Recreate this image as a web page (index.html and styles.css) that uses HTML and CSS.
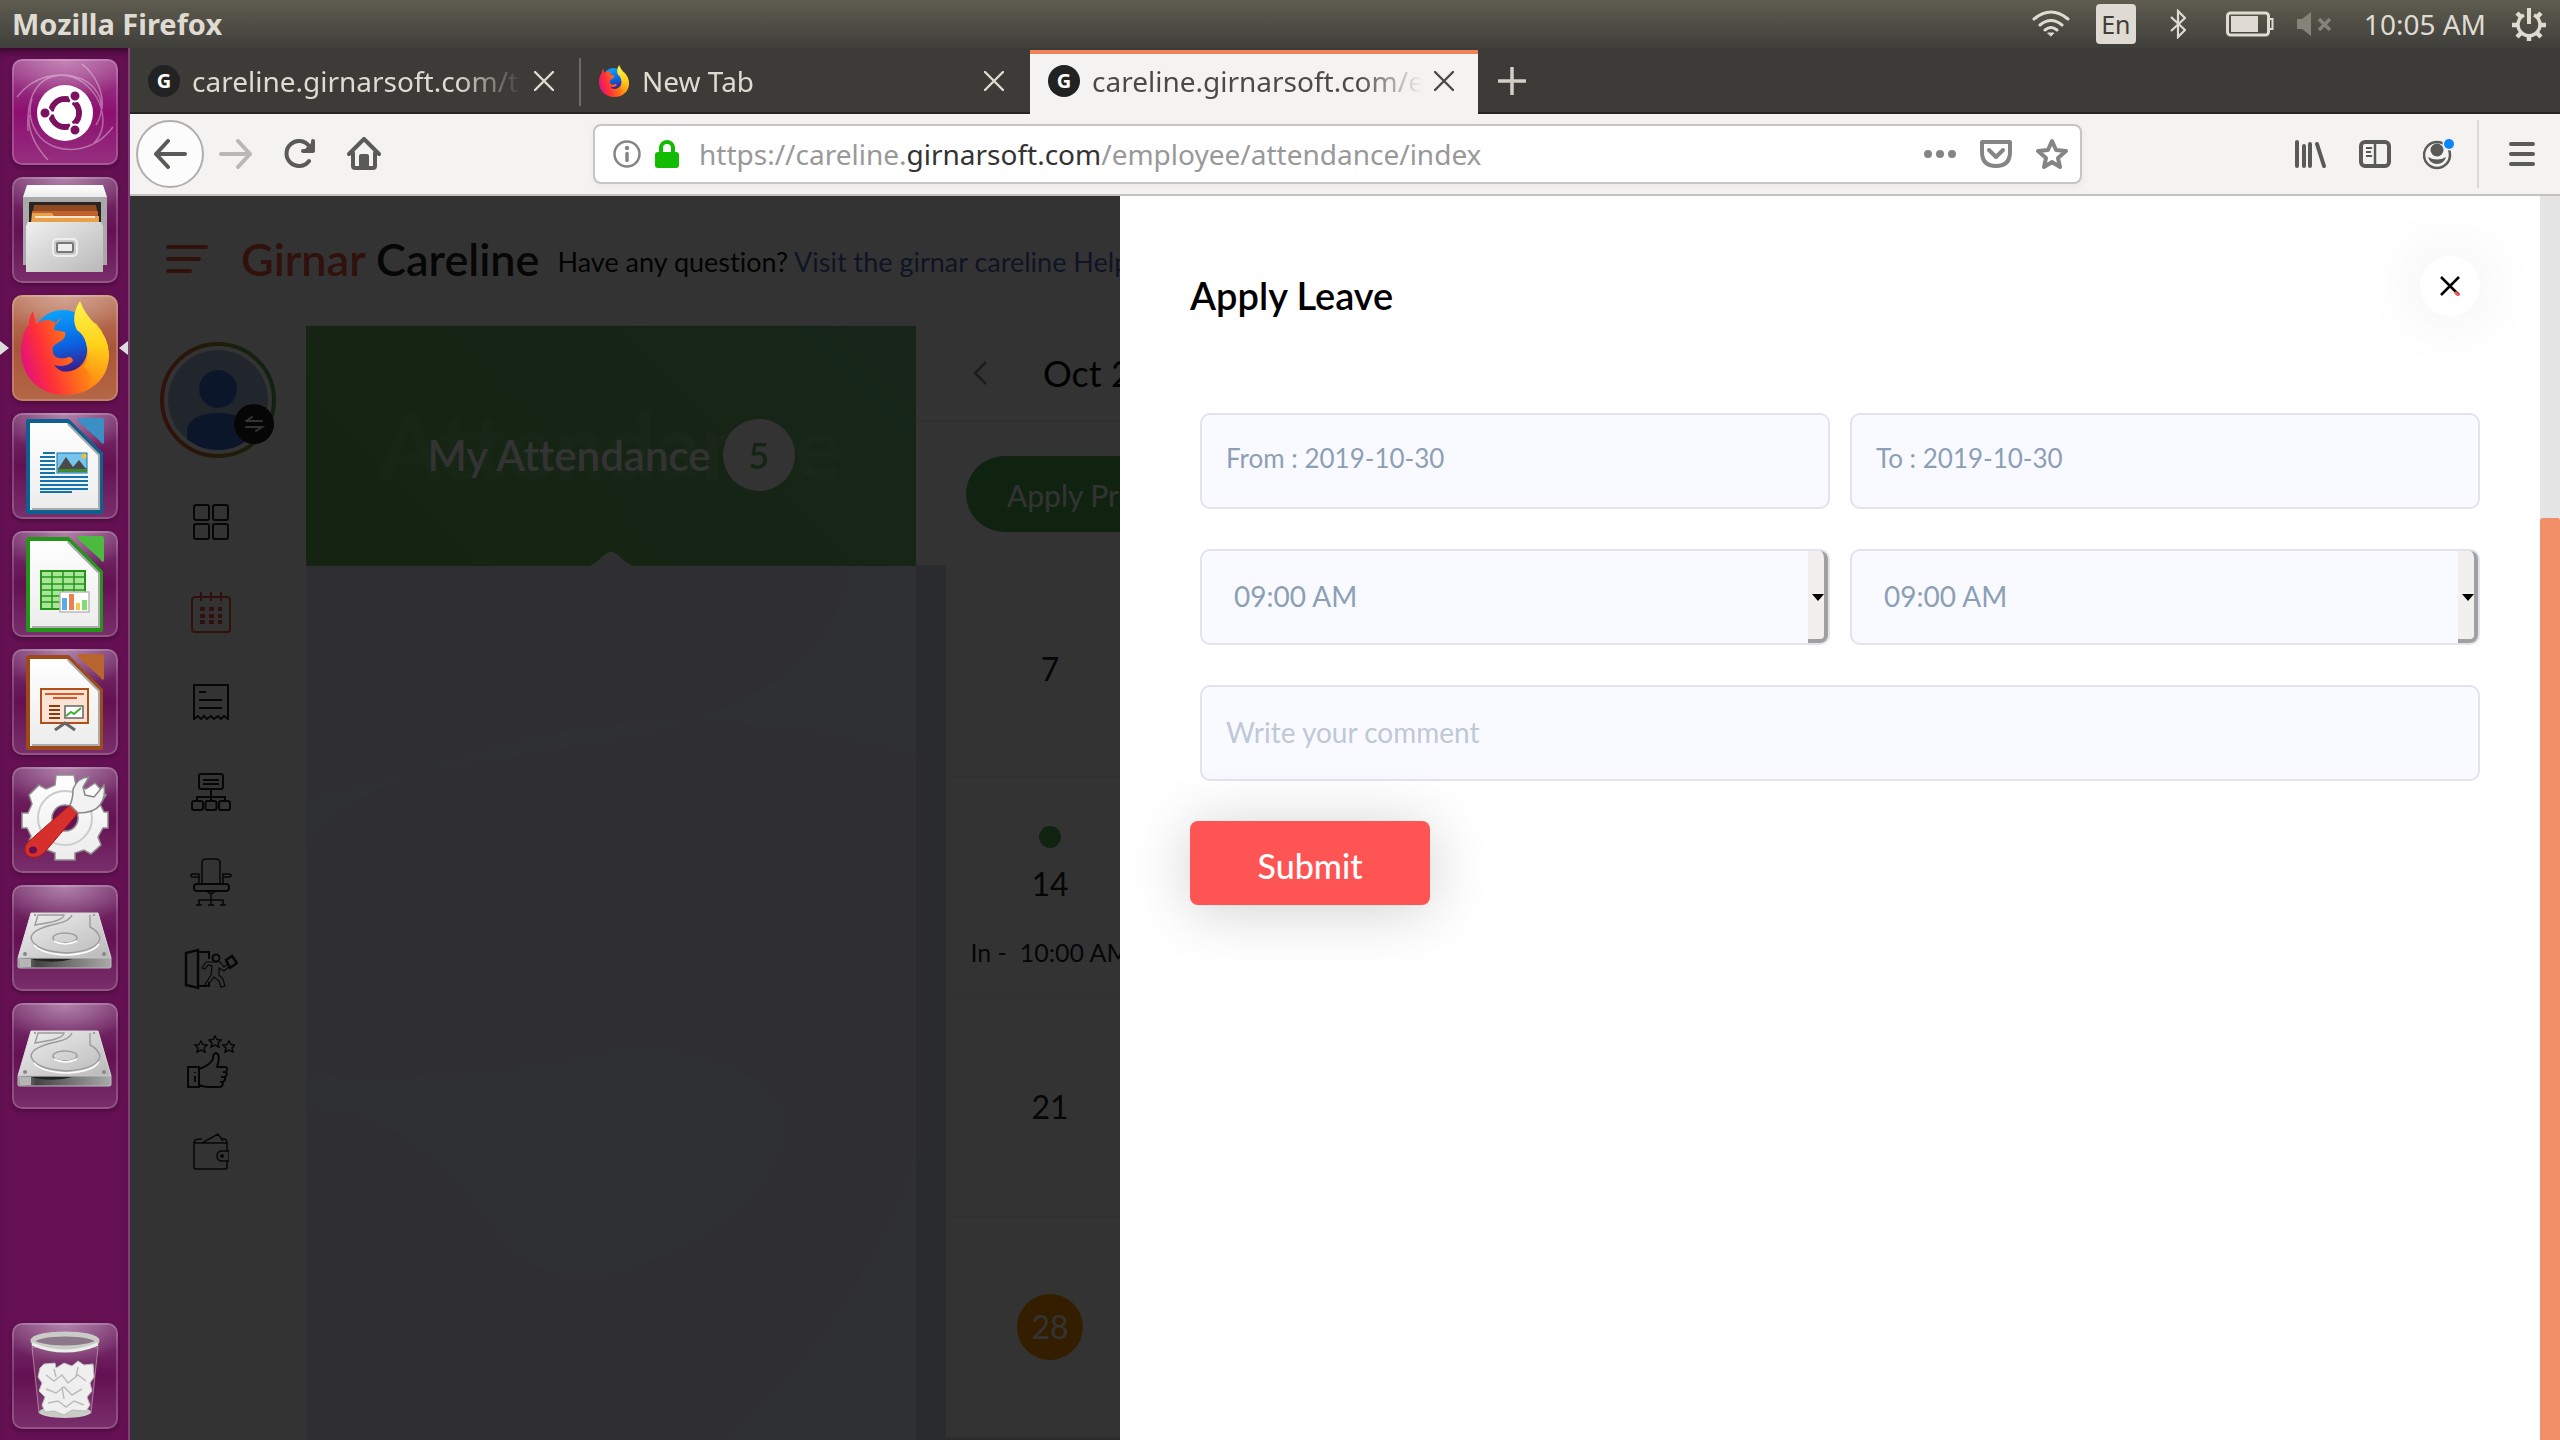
FILE: index.html
```html
<!DOCTYPE html>
<html lang="en">
<head>
<meta charset="utf-8">
<title>Mozilla Firefox</title>
<link rel="stylesheet" href="styles.css">
</head>
<body>

<svg class="defs" aria-hidden="true">
  <defs>
    <linearGradient id="foxBody" x1="0" y1="0.6" x2="1" y2="0.3">
      <stop offset="0" stop-color="#e3107e"/><stop offset="0.25" stop-color="#ff3038"/><stop offset="0.6" stop-color="#ff7a14"/><stop offset="1" stop-color="#ffc31f"/>
    </linearGradient>
    <linearGradient id="foxFlame" x1="0" y1="0" x2="0" y2="1">
      <stop offset="0" stop-color="#fff44f"/><stop offset="0.5" stop-color="#ffd21a"/><stop offset="1" stop-color="#ff8a12" stop-opacity="0.4"/>
    </linearGradient>
    <linearGradient id="foxGlobe" x1="0.3" y1="0" x2="0.5" y2="1">
      <stop offset="0" stop-color="#0aa5ff"/><stop offset="0.6" stop-color="#0b62e0"/><stop offset="1" stop-color="#3a1c8c"/>
    </linearGradient>
    <linearGradient id="metal" x1="0" y1="0" x2="1" y2="1">
      <stop offset="0" stop-color="#f0f0f0"/><stop offset="1" stop-color="#b8b8b8"/>
    </linearGradient>
    <linearGradient id="metalDark" x1="0" y1="0" x2="1" y2="0">
      <stop offset="0" stop-color="#9a9a9a"/><stop offset="0.2" stop-color="#444"/><stop offset="1" stop-color="#aaa"/>
    </linearGradient>
    <linearGradient id="paper" x1="0" y1="0" x2="0" y2="1">
      <stop offset="0" stop-color="#fff"/><stop offset="1" stop-color="#ececec"/>
    </linearGradient>
    <linearGradient id="ring" x1="0" y1="0.6" x2="1" y2="0.4">
      <stop offset="0" stop-color="#f0563a"/><stop offset="0.5" stop-color="#a8842f"/><stop offset="1" stop-color="#4caf50"/>
    </linearGradient>
    <symbol id="firefox" viewBox="0 0 90 94">
      <circle cx="43" cy="40" r="31" fill="url(#foxGlobe)"/>
      <path fill="url(#foxBody)" d="M13 10 16 23Q28 15 37 23L41 16Q34 22 34 29L45 31Q47 37 38 42Q31 44 33 52Q35 59 46 57Q52 54 53 60Q47 67 34 64Q43 76 58 67Q70 58 67 38Q66 20 76 22Q88 36 89 54C89 78 70 94 45 94C20 94 0 76 1 48Q2 30 9 24Q9 15 13 10Z"/>
      <path fill="url(#foxFlame)" d="M60 0Q64 12 76 24Q89 38 89 54Q86 78 66 88Q76 74 64 66Q70 56 66 42Q64 34 57 29Q50 16 60 0Z"/>
    </symbol>
    <symbol id="close" viewBox="0 0 20 20"><path d="M1 1 19 19M19 1 1 19" fill="none" stroke="currentColor" stroke-width="2.4" stroke-linecap="round"/></symbol>
    <symbol id="drive" viewBox="0 0 106 106">
      <path fill="url(#metal)" stroke="#ddd" d="M19 22H86L99 67H6Z"/>
      <path fill="url(#metalDark)" stroke="#bbb" d="M6 67H99V76Q99 77 97 77H8Q6 77 6 76Z"/>
      <path fill="#b5b5b5" d="M7 68H19V76H8Z"/><path fill="#222" d="M20 68H60Q44 73 22 69Z"/>
      <g fill="none" stroke="#9c9c9c" stroke-width="1.4"><path d="M23 34 26 24H52Q52 28 40 31ZM60 24Q58 30 44 33Q20 38 19 47Q22 60 54 62Q86 60 88 47Q86 40 78 36V24"/><ellipse cx="53" cy="47" rx="12" ry="5"/></g>
      <path fill="none" stroke="#fff" stroke-width="1.600" d="M22 54Q30 63 54 64Q80 63 87 53M42 50Q53 56 65 50"/>
      <g fill="#888"><circle cx="13" cy="63" r="2"/><circle cx="92" cy="63" r="2"/><circle cx="23" cy="24" r="1"/><circle cx="82" cy="24" r="1"/></g>
    </symbol>
    <symbol id="favicon" viewBox="0 0 32 32"><circle cx="16" cy="16" r="16" fill="#222"/><text x="16" y="23" text-anchor="middle" class="favicon-letter">G</text></symbol>
  </defs>
</svg>

<header class="panel">
  <span class="panel-title">Mozilla Firefox</span>
  <div class="indicators">
    <svg width="38" height="28" viewBox="0 0 38 28" fill="none" stroke="#dfdbd2" stroke-width="3" stroke-linecap="round"><path d="M2 9Q19 -5 36 9M8 15Q19 6 30 15M13 20Q19 15 25 20"/><path d="M16 23H22L19 26Z" fill="#dfdbd2" stroke-width="1"/></svg>
    <span class="lang">En</span>
    <svg width="16" height="30" viewBox="0 0 16 30" fill="none" stroke="#dfdbd2" stroke-width="2.200"><path d="M1 8 15 21 8 28V2L15 9 1 22"/></svg>
    <svg width="48" height="26" viewBox="0 0 48 26"><rect x="1.500" y="2" width="41" height="22" rx="3" fill="none" stroke="#dfdbd2" stroke-width="3"/><rect x="5" y="5" width="27" height="16" fill="#dfdbd2"/><path d="M44 8H46.500V18H44" fill="none" stroke="#dfdbd2" stroke-width="2"/></svg>
    <svg width="35" height="24" viewBox="0 0 35 24"><path d="M0 7H5L14 0V24L5 17H0Z" fill="#85827a"/><path d="M22 7 33 18M33 7 22 18" stroke="#85827a" stroke-width="3.500"/></svg>
    <time class="clock">10:05 AM</time>
    <svg width="34" height="34" viewBox="0 0 34 34" fill="none" stroke="#dfdbd2"><path d="M12 8A11 11 0 1 0 22 8" stroke-width="3.500"/><path d="M17 1V17" stroke-width="4"/><path d="M17 29V34M0 18H5M29 18H34M5 6 9 10M29 6 25 10M5 30 9 26M29 30 25 26" stroke-width="4.500"/></svg>
  </div>
</header>

<div class="desktop">
  <nav class="launcher" aria-label="Launcher">
    <a href="#" class="tile tile-dash" aria-label="Search your computer">
      <svg viewBox="0 0 106 106"><g fill="none" stroke="#fff" stroke-opacity="0.35" stroke-width="1.500"><path d="M5 38C20 18 50 8 72 24C94 42 96 70 82 84M16 72C14 36 26 16 52 16C84 18 98 44 84 66M101 68C80 96 44 96 28 78C18 66 16 52 20 40M36 101C22 86 16 70 17 56M70 5C84 16 92 34 90 50"/></g><circle cx="53" cy="54" r="28" fill="#fff"/><circle cx="53" cy="54" r="14" fill="none" stroke="#7a1260" stroke-width="6"/><path d="M53 54 37 54M53 54 61 40M53 54 61 68" stroke="#fff" stroke-width="3"/><circle cx="53" cy="54" r="11" fill="#fff"/><g fill="#7a1260" stroke="#fff" stroke-width="2"><circle cx="33" cy="54" r="5.500"/><circle cx="63" cy="37" r="5.500"/><circle cx="63" cy="71" r="5.500"/></g></svg>
    </a>
    <a href="#" class="tile" aria-label="Files">
      <svg viewBox="0 0 106 106"><path fill="#a9a9a9" d="M11 20H95V88H11Z"/><path fill="url(#paper)" d="M15 8H91L95 20H11Z"/><path fill="#2b2321" d="M17 25H89V48H17Z"/><path fill="#8f4a22" d="M22 28H84L87 46H19Z"/><path fill="#c2602c" d="M20 34H86V46H20Z"/><path fill="#e9a04a" d="M20 36H40L42 39H87V46H19Z"/><path stroke="#fff" stroke-width="1.500" d="M23 40H83"/><path fill="url(#metal)" d="M16 45H89L91 49V95H14V49Z"/><rect x="41" y="62" width="24" height="17" rx="4" fill="#ccc" stroke="#eee" stroke-width="2"/><rect x="45" y="66" width="16" height="9" rx="1" fill="#eee" stroke="#777" stroke-width="2"/></svg>
    </a>
    <a href="#" class="tile tile-running" aria-label="Firefox">
      <svg viewBox="0 0 106 106"><use href="#firefox" x="8" y="6" width="90" height="94"/></svg>
    </a>
    <a href="#" class="tile" aria-label="Writer">
      <svg viewBox="0 0 106 106"><path fill="url(#paper)" stroke="#0d6191" stroke-width="4" stroke-linejoin="round" d="M16 8H56L89 41V99H16Z"/><path fill="none" stroke="#aaa" stroke-width="2" d="M20 96H87V42L56 11"/><path fill="#3a8fc4" d="M66 5H90Q92 5 92 8V30Q90 32 88 28L67 9Q65 6 66 5Z"/><g stroke="#1373ae" stroke-width="2"><path d="M31 40H43M28 44H43M28 48H43M28 52H43M28 56H43M28 60H43M28 64H76M28 68H76M28 72H76M28 76H76M28 79H60"/></g><rect x="45" y="40" width="30" height="20" fill="#77c4ee" stroke="#1373ae"/><path fill="#3f8a2e" d="M46 55H75V59H46Z"/><path fill="#4a4a4a" d="M46 56 54 44 61 54 67 47 74 56Z"/><circle cx="72" cy="43" r="2.500" fill="#f3c12b"/></svg>
    </a>
    <a href="#" class="tile" aria-label="Calc">
      <svg viewBox="0 0 106 106"><path fill="url(#paper)" stroke="#23961a" stroke-width="4" stroke-linejoin="round" d="M16 8H56L89 41V99H16Z"/><path fill="none" stroke="#aaa" stroke-width="2" d="M20 96H87V42L56 11"/><path fill="#4cb93f" d="M66 5H90Q92 5 92 8V30Q90 32 88 28L67 9Q65 6 66 5Z"/><rect x="29" y="40" width="44" height="38" fill="#a9e596" stroke="#23961a" stroke-width="2"/><path fill="none" stroke="#23961a" stroke-width="1.500" d="M29 46H73M29 53H73M29 59H73M29 65H73M29 71H73M40 40V78M51 40V78M62 40V78"/><rect x="48" y="61" width="29" height="20" fill="#fff" stroke="#bbb" stroke-width="1.500"/><path fill="#5ba9e8" d="M50 67H55V79H50Z"/><path fill="#e98250" d="M57 63H62V79H57Z"/><path fill="#f3c84c" d="M64 72H68V79H64Z"/><path fill="#7fdd6f" d="M70 69H75V79H70Z"/></svg>
    </a>
    <a href="#" class="tile" aria-label="Impress">
      <svg viewBox="0 0 106 106"><path fill="url(#paper)" stroke="#9c4a1a" stroke-width="4" stroke-linejoin="round" d="M16 8H56L89 41V99H16Z"/><path fill="none" stroke="#aaa" stroke-width="2" d="M20 96H87V42L56 11"/><path fill="#b8652f" d="M66 5H90Q92 5 92 8V30Q90 32 88 28L67 9Q65 6 66 5Z"/><rect x="29" y="40" width="47" height="34" fill="#fbe3d4" stroke="#b2501c" stroke-width="2"/><path stroke="#d9582a" stroke-width="2" d="M33 45H72M41 49H65"/><path stroke="#8c3b10" stroke-width="2" d="M37 57H48M37 61H48M37 65H48M37 69H48"/><rect x="53" y="57" width="18" height="12" fill="#fff" stroke="#666" stroke-width="1.500"/><path fill="none" stroke="#45ad36" stroke-width="2" d="M54 67 59 63 62 65 69 59"/><path fill="none" stroke="#666" stroke-width="3" d="M43 81 53 74 63 81"/></svg>
    </a>
    <a href="#" class="tile" aria-label="System Settings">
      <svg viewBox="0 0 106 106"><path fill="url(#paper)" stroke="#8d8d8d" stroke-width="1.500" fill-rule="evenodd" d="M44 8H62L64 18 74 22 83 16 94 28 88 37 92 45H96V61H91L86 70 89 78 79 87 72 83 63 86V93H43V86L33 82 24 86 16 77 19 69 15 61H10V46H16L20 37 17 28 27 18 34 22 43 18ZM53 38A13 13 0 1 0 53.100 38Z"/><circle cx="53" cy="51" r="27" fill="none" stroke="#ccc" stroke-width="2"/><path fill="#d62f2c" stroke="#a31a1a" d="M58 38 66 46 32 86Q24 93 16 89Q10 83 15 76Z"/><path fill="#f2f2f2" stroke="#888" stroke-width="1.500" d="M58 38 66 46Q82 46 88 38Q94 30 92 18L82 30 73 28 71 20 77 10Q66 10 61 22Q61 32 58 38Z"/><ellipse cx="21" cy="83" rx="4" ry="3.500" fill="#641052"/></svg>
    </a>
    <a href="#" class="tile" aria-label="First volume"><svg viewBox="0 0 106 106"><use href="#drive" y="6"/></svg></a>
    <a href="#" class="tile" aria-label="Second volume"><svg viewBox="0 0 106 106"><use href="#drive" y="6"/></svg></a>
    <a href="#" class="tile tile-trash" aria-label="Trash">
      <svg viewBox="0 0 106 106"><path fill="#fff" fill-opacity="0.1" stroke="#cbb" stroke-opacity="0.6" d="M20 24H86L79 90Q53 98 27 90Z"/><ellipse cx="53" cy="89" rx="26" ry="6" fill="#c9cbc5"/><path fill="#efefef" stroke="#bdbdbd" d="M28 45 32 41 43 40 44 45 52 40 60 43 66 38 72 42 81 41 82 54 78 60 80 68 75 74 78 82 74 88 60 87 52 92 42 88 33 89 30 82 33 74 27 68 30 60 26 54Z"/><path fill="none" stroke="#bcbcbc" stroke-width="1.500" d="M34 52 42 58 50 52 56 60 66 52 74 58M34 66 44 70 52 64 60 72 70 66M36 80 46 78 54 84 62 78 72 82M42 46 44 54M66 44 64 54M50 64 52 76"/><ellipse cx="53" cy="18" rx="32" ry="7" fill="#8d7889" stroke="#c9ccc7" stroke-width="5"/><path fill="none" stroke="#eceeea" stroke-width="3" d="M20 21Q53 35 86 21"/></svg>
    </a>
  </nav>

  <div class="browser">
    <div class="tabs">
      <div class="tab">
        <svg class="tab-icon"><use href="#favicon"/></svg>
        <span class="tab-title">careline.girnarsoft.com/ti</span>
        <button class="tab-close" aria-label="Close tab"><svg><use href="#close"/></svg></button>
      </div>
      <div class="tab tab-second">
        <svg class="tab-icon"><use href="#firefox"/></svg>
        <span class="tab-title">New Tab</span>
        <button class="tab-close" aria-label="Close tab"><svg><use href="#close"/></svg></button>
      </div>
      <div class="tab tab-active">
        <svg class="tab-icon"><use href="#favicon"/></svg>
        <span class="tab-title">careline.girnarsoft.com/e</span>
        <button class="tab-close" aria-label="Close tab"><svg><use href="#close"/></svg></button>
      </div>
      <button class="new-tab" aria-label="New tab"><svg width="28" height="28" viewBox="0 0 28 28"><path d="M14 1V27M1 14H27" stroke="#d3cfc6" stroke-width="3.500" stroke-linecap="round"/></svg></button>
    </div>

    <div class="toolbar">
      <div class="nav-buttons">
        <button class="nav-back" aria-label="Back"><svg width="34" height="30" viewBox="0 0 34 30" fill="none" stroke="#5a5a57" stroke-width="4" stroke-linecap="round" stroke-linejoin="round"><path d="M15 2 3 15 15 28M3 15H32"/></svg></button>
        <button aria-label="Forward"><svg width="34" height="30" viewBox="0 0 34 30" fill="none" stroke="#b9b8b6" stroke-width="4" stroke-linecap="round" stroke-linejoin="round"><path d="M19 2 31 15 19 28M31 15H2"/></svg></button>
        <button aria-label="Reload"><svg width="32" height="30" viewBox="0 0 32 30" fill="none" stroke="#5a5a57" stroke-width="4" stroke-linecap="round"><path d="M25 22A12.500 12.500 0 1 1 25 7"/><path d="M29 2V12H19" stroke-linejoin="round" fill="#5a5a57"/></svg></button>
        <button aria-label="Home"><svg width="34" height="34" viewBox="0 0 34 34" fill="none" stroke="#5a5a57" stroke-width="4" stroke-linecap="round" stroke-linejoin="round"><path d="M2 17 17 2 32 17M6 16V29Q6 31 8 31H26Q28 31 28 29V16"/><path d="M14 30V19H20V30" fill="#5a5a57"/></svg></button>
      </div>
      <div class="urlbar">
        <svg width="28" height="28" viewBox="0 0 28 28"><circle cx="14" cy="14" r="12.500" fill="none" stroke="#858585" stroke-width="2.500"/><circle cx="14" cy="8" r="2.200" fill="#858585"/><path d="M14 13.500V20.500" stroke="#858585" stroke-width="3.500" stroke-linecap="round"/></svg>
        <svg width="24" height="28" viewBox="0 0 24 28"><path d="M6 14V8A6 6 0 0 1 18 8V14" fill="none" stroke="#12bc00" stroke-width="4"/><rect y="12" width="24" height="16" rx="3" fill="#12bc00"/></svg>
        <span class="url">https://careline.<b>girnarsoft.com</b>/employee/attendance/index</span>
        <svg width="32" height="8" viewBox="0 0 32 8" fill="#858585"><circle cx="4" cy="4" r="4"/><circle cx="16" cy="4" r="4"/><circle cx="28" cy="4" r="4"/></svg>
        <svg width="32" height="28" viewBox="0 0 32 28" fill="none" stroke="#858585" stroke-width="4" stroke-linejoin="round" stroke-linecap="round"><path d="M2 2H30V12Q30 26 16 26Q2 26 2 12Z"/><path d="M9 10 16 17 23 10"/></svg>
        <svg width="32" height="32" viewBox="0 0 32 32" fill="none" stroke="#858585" stroke-width="4" stroke-linejoin="round"><path d="M16 3 20 12 30 13 22 20 24 29 16 24 8 29 10 20 2 13 12 12Z"/></svg>
      </div>
      <div class="tool-buttons">
        <button aria-label="Library"><svg width="32" height="28" viewBox="0 0 32 28" stroke="#5a5a57" stroke-width="4" stroke-linecap="round"><path d="M2 2V26M9 6V26M15 4V26M22 4 29 26"/></svg></button>
        <button aria-label="Sidebars"><svg width="32" height="28" viewBox="0 0 32 28" fill="none" stroke="#5a5a57" stroke-width="4"><rect x="2" y="2" width="28" height="24" rx="4"/><path d="M16 3V25" stroke-width="2.500"/><path d="M7 8H13M7 12H12M7 16H13" stroke-width="2"/></svg></button>
        <button aria-label="Account"><svg width="32" height="32" viewBox="0 0 32 32"><circle cx="14" cy="17" r="13" fill="none" stroke="#5a5a57" stroke-width="2.500"/><circle cx="14" cy="12" r="6.500" fill="#5a5a57"/><path d="M5 19Q14 24 23 19Q21 26 14 26Q7 26 5 19Z" fill="#5a5a57"/><circle cx="26" cy="6" r="6.500" fill="#f4f3f1"/><circle cx="26" cy="6" r="5" fill="#0a84ff"/></svg></button>
      </div>
      <button class="menu" aria-label="Menu"><svg width="26" height="26" viewBox="0 0 26 26" stroke="#5a5a57" stroke-width="4" stroke-linecap="round"><path d="M2 3H24M2 13H24M2 23H24"/></svg></button>
    </div>

    <div class="viewport">
      <div class="site">
        <header class="site-header">
          <button class="burger" aria-label="Toggle menu"><span></span><span></span><span></span></button>
          <div class="brand"><em>Girnar</em> Careline</div>
          <p class="help">Have any question? <a href="#">Visit the girnar careline Help</a></p>
        </header>
        <div class="site-main">
          <nav class="side" aria-label="Sections">
            <a href="#" class="avatar" aria-label="Profile">
              <svg width="116" height="116" viewBox="0 0 116 116"><clipPath id="face"><circle cx="58" cy="58" r="50"/></clipPath><circle cx="58" cy="58" r="56" fill="none" stroke="url(#ring)" stroke-width="4"/><g clip-path="url(#face)"><path fill="#a3b8dd" d="M0 0H116V116H0Z"/><circle cx="58" cy="47" r="19" fill="#3f6fd8"/><path fill="#3f6fd8" d="M27 116V86Q32 71 58 71Q84 71 89 86V116Z"/></g><circle cx="94" cy="82" r="20" fill="#222"/><path d="M86 79H102M86 79 92 75M86 85H102L96 89" fill="none" stroke="#fff" stroke-width="2" stroke-linecap="round"/></svg>
            </a>
            <a href="#" aria-label="Dashboard"><svg width="36" height="36" viewBox="0 0 36 36"><g><rect x="1" y="1" width="15" height="15" rx="2"/><rect x="20" y="1" width="15" height="15" rx="2"/><rect x="1" y="20" width="15" height="15" rx="2"/><rect x="20" y="20" width="15" height="15" rx="2"/></g></svg></a>
            <a href="#" class="current" aria-label="Attendance"><svg width="40" height="42" viewBox="0 0 40 42"><rect x="1" y="6" width="38" height="35" rx="3"/><path d="M10 1V10M20 1V10M30 1V10"/><path stroke-width="4" stroke-dasharray="5 4" d="M9 18H31M9 25H31M9 31H31"/></svg></a>
            <a href="#" aria-label="Payslip"><svg width="36" height="36" viewBox="0 0 36 36"><path d="M1 35V1H35V35L31 32 28 35 25 32 21 35 18 32 14 35 11 32 8 35 5 32ZM6 8H13M6 16H29M6 24H29"/></svg></a>
            <a href="#" aria-label="Organisation"><svg width="40" height="38" viewBox="0 0 40 38"><rect x="8" y="1" width="24" height="15" rx="2"/><path d="M12 7H28M12 11H28M20 16V28M6 28V24H34V28"/><rect x="1" y="28" width="11" height="9" rx="2"/><rect x="14.500" y="28" width="11" height="9" rx="2"/><rect x="28" y="28" width="11" height="9" rx="2"/></svg></a>
            <a href="#" aria-label="Seating"><svg width="42" height="48" viewBox="0 0 42 48"><path stroke-width="1.500" d="M12 26V5Q12 1 16 1H26Q30 1 30 5V26M9 26V19H3Q1 19 1 17.500Q1 16 3 16H9V19M33 26V19H39Q41 19 41 17.500Q41 16 39 16H33V19M17 33Q21 38 25 33M21 36V47M9 47V42H33V47M6 47H12M18 47H24M30 47H36"/><rect x="4" y="26" width="35" height="7" rx="3"/></svg></a>
            <a href="#" aria-label="Exit"><svg width="54" height="48" viewBox="0 0 54 48"><path stroke-width="2.500" d="M2 5 14 2V40L2 37Z"/><path d="M15 4H25V11M15 38H25V34"/><circle cx="32" cy="10" r="3.500"/><path stroke-width="1.200" d="M28 14H36L40 19 44 16 46 18 40 23 35 20V27L39 31 41 38 37 39 35 33 30 29 23 38 20 38 27 27 28 18 24 17 21 21 18 20 22 14Z"/><path stroke-width="2.500" d="M42 12 48 8 53 15 46 20Z"/></svg></a>
            <a href="#" aria-label="Recognition"><svg width="48" height="54" viewBox="0 0 48 54"><path d="M1 32H12V52H1ZM8 37V38M8 41V47M12 34Q22 31 26 24Q26 18 29 18Q34 19 30 32H38Q42 33 39 37H36M39 37Q41 39 38 42H34M38 42Q39 45 36 47H33M36 47Q36 52 32 52H20Q14 51 12 50"/><g stroke-width="1.500"><path d="M14 6 16 9.500 20 10 17 13 18 17 14 15 10 17 11 13 8 10 12 9.500ZM28 1 30 4.500 34 5 31 8 32 12 28 10 24 12 25 8 22 5 26 4.500ZM42 6 44 9.500 48 10 45 13 46 17 42 15 38 17 39 13 36 10 40 9.500Z"/></g></svg></a>
            <a href="#" aria-label="Wallet"><svg width="36" height="38" viewBox="0 0 36 38"><path stroke-width="1.500" d="M34 18V10H3Q1 9 2 7Q3 6 9 6M1 8V34Q1 36 3 36H32Q34 36 34 34V28M9 10 25 1 30 8M29 6H32Q34 7 34 10M36 18H28Q24 19 24 23Q24 27 28 28H36Z"/><circle cx="29" cy="23" r="1"/></svg></a>
          </nav>

          <section class="summary">
            <div class="summary-card">
              <span class="watermark" aria-hidden="true">Attendance</span>
              <h2>My Attendance</h2><span class="count">5</span>
              <svg class="notch" width="44" height="14" viewBox="0 0 44 14"><path fill="#ebebf5" d="M0 14Q6 12 14 4Q22 -4 30 4Q38 12 44 14Z"/></svg>
            </div>
            <svg class="waves" viewBox="0 0 610 874" preserveAspectRatio="none"><path fill="#e8edf3" d="M545 0H610V190Q400 120 160 190Q40 225 0 280V235Q120 200 330 170Q520 130 545 0ZM0 510Q180 520 330 480Q480 500 480 560Q470 650 330 700Q230 740 170 640Q90 540 0 540ZM610 590V874H420Q560 740 610 590Z"/></svg>
          </section>

          <section class="calendar">
            <div class="month">
              <button aria-label="Previous month"><svg width="14" height="24" viewBox="0 0 14 24"><path d="M13 1 2 12 13 23" fill="none" stroke="#8a8a96" stroke-width="2.500"/></svg></button>
              <span>Oct 2019</span>
            </div>
            <div class="actions"><button class="pill">Apply Previous</button></div>
            <div class="grid-wrap">
              <table class="days">
                <tr><td>7</td></tr>
                <tr><td class="logged"><i class="dot"></i>14<small>In -&nbsp; 10:00 AM</small></td></tr>
                <tr><td>21</td></tr>
                <tr><td><span class="today">28</span></td></tr>
              </table>
            </div>
          </section>
        </div>
      </div>

      <div class="scrim"></div>
      <aside class="drawer" aria-labelledby="drawer-title">
        <div class="drawer-head">
          <h1 id="drawer-title">Apply Leave</h1>
          <button class="drawer-close" aria-label="Close"><svg width="20" height="20" viewBox="0 0 20 20"><path d="M1 1 19 19M19 1 1 19" fill="none" stroke="#000" stroke-width="2.500"/><path d="M15 16 19 20" stroke="#ff5454" stroke-width="3"/></svg></button>
        </div>
        <form class="leave">
          <input type="text" class="date" aria-label="From date" value="From : 2019-10-30">
          <input type="text" class="date" aria-label="To date" value="To : 2019-10-30">
          <div class="picker"><select aria-label="From time"><option>09:00 AM</option></select></div>
          <div class="picker"><select aria-label="To time"><option>09:00 AM</option></select></div>
          <input type="text" class="comment" aria-label="Comment" placeholder="Write your comment">
          <button type="button" class="submit">Submit</button>
        </form>
      </aside>
      <div class="scrollbar"><div class="thumb"></div></div>
    </div>
  </div>
</div>
</body>
</html>
```
FILE: styles.css
```css
*, *::before, *::after { box-sizing: border-box; }

body {
  margin: 0;
  height: 100vh;
  display: flex;
  flex-direction: column;
  overflow: hidden;
  font-family: "Lato", "Open Sans", sans-serif;
  font-variant-ligatures: none;
}

button {
  padding: 0;
  border: 0;
  background: none;
  font: inherit;
  display: inline-flex;
  align-items: center;
  justify-content: center;
}

.defs { position: absolute; width: 0; height: 0; }
svg { display: block; flex: none; }

/* Desktop top panel */
.panel {
  flex: none;
  height: 48px;
  padding: 0 14px 0 12px;
  display: flex;
  align-items: center;
  justify-content: space-between;
  background: linear-gradient(#5f5d50, #3f3e3a);
  color: #dfdbd2;
  font: 28px/48px "Noto Sans", sans-serif;
}
.panel-title { font-size: 29px; font-weight: 700; }
.indicators { display: flex; align-items: center; }
.lang {
  width: 40px;
  margin: 0 34px 0 26px;
  border-radius: 4px;
  background: #dfdbd2;
  color: #3f3e3a;
  font-size: 25px;
  line-height: 40px;
  text-align: center;
}
.indicators svg:nth-of-type(2) { margin-right: 40px; }
.indicators svg:nth-of-type(3) { margin-right: 23px; }
.clock { margin: 0 26px 0 32px; }

.desktop { flex: 1; min-height: 0; display: flex; }

/* Launcher */
.launcher {
  flex: none;
  width: 130px;
  padding: 11px 10px 11px 12px;
  display: flex;
  flex-direction: column;
  gap: 12px;
  border-right: 2px solid #834078;
  background: #641052;
  box-shadow: inset 0 8px 8px -6px #2a0622;
}
.tile {
  position: relative;
  width: 106px;
  height: 106px;
  border-radius: 10px;
  background: radial-gradient(ellipse 70px 40px at 50% 0, #b184ab, #b184ab00), linear-gradient(#7a3570, #641052 50%, #7a2f6c);
  box-shadow: inset 0 0 0 2px #ffffff30, 0 2px 4px #0004;
}
.tile-dash { background: radial-gradient(ellipse 70px 40px at 50% 0, #c684b6, #c684b600), linear-gradient(#a04a90, #8c0f70 50%, #96307f); }
.tile-running { background: radial-gradient(ellipse 70px 40px at 50% 0, #d3a595, #d3a59500), linear-gradient(#bd7a5e, #a9553a 50%, #b56746); }
.tile-running::before, .tile-running::after {
  content: "";
  position: absolute;
  top: 46px;
  border: 7px solid transparent;
}
.tile-running::before { left: -12px; border-left: 9px solid #ddd; border-right: 0; }
.tile-running::after { right: -10px; border-right: 9px solid #ddd; border-left: 0; }
.tile-trash { margin-top: auto; }

/* Browser chrome */
.browser { flex: 1; min-width: 0; display: flex; flex-direction: column; }
.tabs {
  flex: none;
  height: 66px;
  display: flex;
  background: #3c3b37;
  box-shadow: inset 0 -2px #262521;
  color: #dfdbd2;
  font: 28px/66px "Noto Sans", sans-serif;
}
.tab {
  position: relative;
  width: 450px;
  padding: 0 26px 0 18px;
  display: flex;
  align-items: center;
  gap: 12px;
}
.tab-second::before {
  content: "";
  position: absolute;
  left: -1px;
  top: 10px;
  width: 2px;
  height: 48px;
  background: #6d6b65;
}
.tab-active {
  width: 448px;
  margin-top: 2px;
  padding: 0 24px 6px 18px;
  border-top: 4px solid #f08458;
  line-height: 54px;
  background: #f4f3f1;
  color: #4a4a47;
}
.tab-icon { width: 32px; height: 32px; }
.favicon-letter { font: 700 20px "Noto Sans", sans-serif; fill: #fff; }
.tab-title {
  flex: 1;
  min-width: 0;
  overflow: hidden;
  white-space: nowrap;
  mask-image: linear-gradient(to left, transparent, #000 64px);
}
.tab-close { width: 20px; color: inherit; }
.tab-close svg { width: 20px; height: 20px; }
.new-tab { width: 68px; }

.toolbar {
  flex: none;
  height: 82px;
  padding: 6px 25px 6px 6px;
  display: flex;
  align-items: center;
  background: #f4f3f1;
  border-bottom: 2px solid #c3c2c0;
}
.nav-buttons { width: 457px; display: flex; align-items: center; }
.nav-buttons button { width: 64px; height: 68px; }
.nav-buttons .nav-back {
  width: 68px;
  border: 2px solid #b0afad;
  border-radius: 50%;
  background: #fcfcfc;
}
.urlbar {
  flex: 1;
  height: 60px;
  padding: 0 12px 0 18px;
  display: flex;
  align-items: center;
  gap: 14px;
  border: 2px solid #c6c5c3;
  border-radius: 8px;
  background: #fff;
  box-shadow: 0 2px 8px #0000000d;
  color: #999;
  font: 28px/56px "Noto Sans", sans-serif;
}
.urlbar svg:nth-of-type(n+4) { margin-left: 10px; }
.url { flex: 1; padding-left: 6px; white-space: nowrap; }
.url b { font-weight: 400; color: #333; }
.tool-buttons { width: 395px; padding-right: 22px; display: flex; justify-content: flex-end; gap: 32px; }
.menu { height: 68px; padding-left: 30px; border-left: 2px solid #dad9d7; }

/* Page */
.viewport {
  position: relative;
  flex: 1;
  min-height: 0;
  display: flex;
  overflow: hidden;
  background: #fff;
}
.site { flex: 1; min-width: 0; display: flex; flex-direction: column; }
.site-header {
  flex: none;
  height: 130px;
  padding: 0 36px 4px;
  display: flex;
  align-items: center;
  border-bottom: 1px solid #f3f3f3;
}
.burger { width: 42px; flex-direction: column; align-items: flex-start; gap: 8px; }
.burger span { width: 42px; height: 4px; border-radius: 2px; background: #f0563a; }
.burger span:nth-child(2) { width: 35px; }
.burger span:nth-child(3) { width: 26px; }
.brand { margin: 0 18px 0 33px; font-size: 45px; font-weight: 600; color: #222; white-space: nowrap; }
.brand em { font-style: normal; color: #f0563a; }
.help { margin: 6px 0 0; font-size: 27px; color: #111; white-space: nowrap; }
.help a { color: #4e67b8; text-decoration: none; }

.site-main { flex: 1; min-height: 0; display: flex; }
.side {
  flex: none;
  width: 176px;
  padding: 16px 14px 0 0;
  display: flex;
  flex-direction: column;
  align-items: center;
}
.side a { height: 90px; display: flex; align-items: center; }
.side .avatar { height: 116px; margin: 0 0 19px 14px; }
.side a:not(.avatar) svg { fill: none; stroke: #222; stroke-width: 2; }
.side a.current svg { stroke: #f0563a; }

.summary { flex: none; width: 610px; display: flex; flex-direction: column; background: #ebebf5; }
.summary-card {
  position: relative;
  flex: none;
  height: 240px;
  padding-top: 18px;
  display: flex;
  align-items: center;
  justify-content: center;
  gap: 12px;
  background: linear-gradient(225deg, #74bb86, #6bb565 45%, #68b459);
  color: #fff;
}
.summary-card h2 { position: relative; margin: 0; font-size: 42px; font-weight: 600; }
.watermark {
  position: absolute;
  inset: 0;
  font-size: 90px;
  font-weight: 700;
  line-height: 236px;
  text-align: center;
  color: #ffffff1c;
}
.count {
  position: relative;
  width: 72px;
  border-radius: 50%;
  background: #fff;
  color: #6bb565;
  font-size: 36px;
  font-weight: 600;
  line-height: 72px;
  text-align: center;
}
.notch { position: absolute; left: calc(50% - 22px); bottom: 0; }
.waves { flex: 1; width: 100%; min-height: 0; }

.calendar { flex: 1; min-width: 0; display: flex; flex-direction: column; overflow: hidden; }
.month {
  flex: none;
  height: 96px;
  padding-left: 57px;
  display: flex;
  align-items: center;
  gap: 56px;
  border-bottom: 2px solid #f0f0f0;
  font-size: 36px;
}
.actions { flex: none; height: 143px; padding-left: 50px; display: flex; align-items: center; }
.pill {
  height: 76px;
  padding: 2px 42px 0 41px;
  border-radius: 38px;
  background: #4caf50;
  color: #fff;
  font-size: 30px;
  white-space: nowrap;
}
.grid-wrap { flex: 1; min-height: 0; padding-left: 30px; background: #d2d7e1; }
.days { width: 100%; border-collapse: collapse; background: #fff; color: #222; font-size: 32px; }
.days td {
  height: 220px;
  padding: 0 calc(100% - 208px) 0 0;
  border-bottom: 2px solid #f3f3f3;
  text-align: center;
  line-height: 40px;
}
.days tr:first-child td { height: 212px; padding-bottom: 4px; }
.days .logged { padding-top: 24px; }
.days small { display: block; margin-top: 28px; font-size: 25px; white-space: nowrap; }
.dot { display: block; width: 22px; height: 22px; margin: 0 auto 16px; border-radius: 50%; background: #4caf50; }
.today {
  display: inline-block;
  width: 66px;
  border-radius: 50%;
  background: #ff9800;
  color: #fff;
  line-height: 66px;
}

.scrim { position: absolute; inset: 0; background: #000c; }

/* Leave drawer lies over the page */
.drawer {
  position: absolute;
  inset: 0 20px 0 990px;
  padding: 60px 60px 0 70px;
  background: #fff;
}
.drawer-head { height: 157px; display: flex; align-items: flex-start; justify-content: space-between; }
.drawer-head h1 { margin: 16px 0 0; font-size: 38px; font-weight: 600; line-height: 46px; }
.drawer-close {
  width: 60px;
  height: 60px;
  border-radius: 50%;
  background: #fff;
  box-shadow: 0 0 60px 16px #0000000a;
}
.leave {
  padding-left: 10px;
  display: grid;
  grid-template-columns: 1fr 1fr;
  gap: 40px 20px;
}
.leave input, .leave select {
  width: 100%;
  height: 96px;
  padding: 0 24px 2px;
  border: 2px solid #e3e3f0;
  border-radius: 10px;
  background: #f9faff;
  color: #8d9fb5;
  font: 28px "Lato", sans-serif;
}
.leave .date { padding-bottom: 6px; font-size: 26px; }
.leave .comment { grid-column: 1 / -1; }
.leave input::placeholder { color: #bfc8d6; opacity: 1; }
.picker { position: relative; }
.leave select { padding-left: 32px; appearance: none; }
.picker::after {
  content: "";
  position: absolute;
  top: 2px;
  right: 2px;
  bottom: 2px;
  width: 20px;
  border: solid #a0a0a0;
  border-width: 0 4px 4px 0;
  border-radius: 0 8px 8px 0;
  background: #f1f0ee;
}
.picker::before {
  content: "";
  position: absolute;
  z-index: 1;
  top: 45px;
  right: 6px;
  border: 6px solid transparent;
  border-top: 7px solid #000;
  border-bottom: 0;
}
.submit {
  width: 240px;
  height: 84px;
  margin-left: -10px;
  padding-top: 5px;
  border-radius: 8px;
  background: #ff5454;
  box-shadow: 0 5px 60px #00000030;
  color: #fff;
  font-size: 34px;
  font-weight: 500;
}

.scrollbar { position: absolute; inset: 0 0 0 auto; width: 20px; padding-top: 322px; background: #e5e5e5; }
.thumb { height: 100%; border-radius: 3px 3px 0 0; background: #f08f68; }
```
